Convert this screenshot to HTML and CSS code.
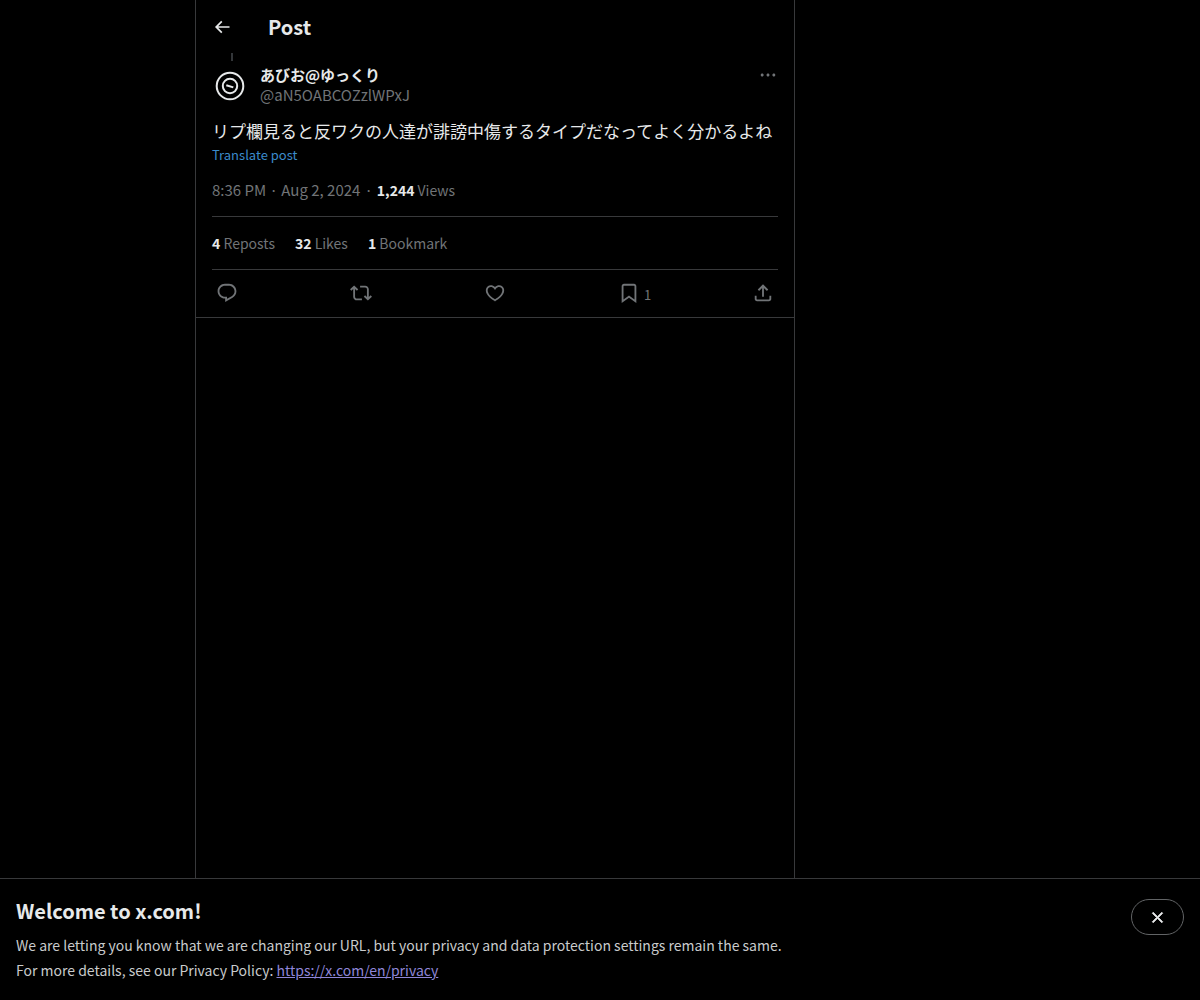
FILE: index.html
```html
<!DOCTYPE html>
<html lang="en">
<head>
<meta charset="utf-8">
<meta name="viewport" content="width=device-width, initial-scale=1">
<title>Post / X</title>
<link rel="stylesheet" href="styles.css">
</head>
<body>
<div class="layout">
  <main class="column">
    <header class="topbar">
      <button class="icon-button" type="button" aria-label="Back">
        <svg class="icon-small" viewBox="0 0 24 24"><path d="M7.414 13l5.043 5.04-1.414 1.42L3.586 12l7.457-7.46 1.414 1.42L7.414 11H21v2H7.414z"/></svg>
      </button>
      <h1 class="topbar-title">Post</h1>
    </header>
    <article class="post">
      <div class="thread"><span class="thread-line"></span></div>
      <div class="author">
        <svg class="avatar" viewBox="0 0 36 36" aria-hidden="true">
          <circle cx="18" cy="18" r="13.3"/>
          <circle cx="18" cy="18" r="7.2"/>
          <path d="M14.3 17.200l7 2.200"/>
        </svg>
        <div class="author-names">
          <a class="author-name" href="#" lang="ja">あびお@ゆっくり</a>
          <a class="author-handle" href="#">@aN5OABCOZzlWPxJ</a>
        </div>
        <button class="icon-button more" type="button" aria-label="More">
          <svg class="icon-small" viewBox="0 0 24 24"><path d="M3.200 12c0-1 .8-1.800 1.800-1.800s1.800.8 1.800 1.800-.8 1.800-1.800 1.800-1.800-.8-1.800-1.800zm8.800 1.800c1 0 1.800-.8 1.800-1.800s-.8-1.800-1.800-1.800-1.800.8-1.800 1.800.8 1.800 1.800 1.800zm7 0c1 0 1.800-.8 1.800-1.800s-.8-1.800-1.800-1.800-1.800.8-1.800 1.800.8 1.800 1.800 1.800z"/></svg>
        </button>
      </div>
      <p class="post-text" lang="ja">リプ欄見ると反ワクの人達が誹謗中傷するタイプだなってよく分かるよね</p>
      <button class="translate" type="button">Translate post</button>
      <div class="meta"><a href="#">8:36 PM · Aug 2, 2024</a><span class="dot">·</span><span class="count"><strong>1,244</strong> Views</span></div>
      <div class="stats">
        <a class="count" href="#"><strong>4</strong> Reposts</a>
        <a class="count" href="#"><strong>32</strong> Likes</a>
        <span class="count"><strong>1</strong> Bookmark</span>
      </div>
      <div class="actions">
        <button class="action" type="button" aria-label="Reply">
          <svg class="icon" viewBox="0 0 24 24"><path d="M1.751 10c0-4.420 3.584-8 8.005-8h4.366c4.490 0 8.129 3.640 8.129 8.130 0 2.960-1.607 5.680-4.196 7.110l-8.054 4.460v-3.690h-.067c-4.490.100-8.183-3.510-8.183-8.010zm8.005-6c-3.317 0-6.005 2.690-6.005 6 0 3.370 2.770 6.080 6.138 6.010l.351-.010h1.761v2.300l5.087-2.810c1.951-1.080 3.163-3.130 3.163-5.360 0-3.390-2.744-6.130-6.129-6.130H9.756z"/></svg>
        </button>
        <button class="action" type="button" aria-label="Repost">
          <svg class="icon" viewBox="0 0 24 24"><path d="M4.500 3.880l4.432 4.140-1.364 1.460L5.500 7.550V16c0 1.100.896 2 2 2H13v2H7.500c-2.209 0-4-1.790-4-4V7.550L1.432 9.480.068 8.020 4.500 3.880zM16.500 6H11V4h5.500c2.209 0 4 1.790 4 4v8.450l2.068-1.930 1.364 1.460-4.432 4.140-4.432-4.140 1.364-1.460 2.068 1.930V8c0-1.100-.896-2-2-2z"/></svg>
        </button>
        <button class="action" type="button" aria-label="Like">
          <svg class="icon" viewBox="0 0 24 24"><path d="M16.697 5.500c-1.222-.060-2.679.510-3.890 2.160l-.805 1.090-.806-1.090C9.984 6.010 8.526 5.440 7.304 5.500c-1.243.070-2.349.780-2.910 1.910-.552 1.120-.633 2.780.479 4.820 1.074 1.970 3.257 4.270 7.129 6.610 3.870-2.340 6.052-4.640 7.126-6.610 1.111-2.040 1.030-3.700.477-4.820-.561-1.130-1.666-1.840-2.908-1.910zm4.187 7.690c-1.351 2.480-4.001 5.120-8.379 7.670l-.503.300-.504-.300c-4.379-2.550-7.029-5.190-8.382-7.670-1.360-2.500-1.410-4.860-.514-6.670.887-1.790 2.647-2.910 4.601-3.010 1.651-.090 3.368.560 4.798 2.010 1.429-1.450 3.146-2.100 4.796-2.010 1.954.100 3.714 1.220 4.601 3.010.896 1.810.846 4.170-.514 6.670z"/></svg>
        </button>
        <button class="action" type="button" aria-label="1 Bookmark">
          <svg class="icon" viewBox="0 0 24 24"><path d="M4 4.500C4 3.120 5.119 2 6.500 2h11C18.881 2 20 3.120 20 4.500v18.440l-8-5.710-8 5.710V4.500zM6.500 4c-.276 0-.5.220-.5.500v14.560l6-4.290 6 4.290V4.500c0-.280-.224-.5-.5-.5h-11z"/></svg>
          <span class="action-count">1</span>
        </button>
        <button class="action" type="button" aria-label="Share">
          <svg class="icon" viewBox="0 0 24 24"><path d="M12 2.590l5.700 5.700-1.410 1.420L13 6.410V16h-2V6.410l-3.300 3.300-1.410-1.420L12 2.590zM21 15l-.020 3.510c0 1.380-1.120 2.490-2.500 2.490H5.500C4.110 21 3 19.880 3 18.500V15h2v3.500c0 .280.220.5.5.5h12.980c.280 0 .5-.220.5-.5L19 15h2z"/></svg>
        </button>
      </div>
    </article>
  </main>
</div>
<section class="banner" aria-labelledby="banner-title">
  <div class="banner-body">
    <h2 class="banner-title" id="banner-title">Welcome to x.com!</h2>
    <p class="banner-text">We are letting you know that we are changing our URL, but your privacy and data protection settings remain the same.</p>
    <p class="banner-text">For more details, see our Privacy Policy: <a class="banner-link" href="#">https://x.com/en/privacy</a></p>
  </div>
  <button class="banner-close" type="button" aria-label="Close">
    <svg class="icon-close" viewBox="0 0 24 24"><path d="M10.590 12L4.540 5.960l1.420-1.420L12 10.590l6.040-6.050 1.420 1.420L13.410 12l6.050 6.040-1.420 1.420L12 13.410l-6.040 6.050-1.420-1.420L10.590 12z"/></svg>
  </button>
</section>
</body>
</html>
```
FILE: styles.css
```css
:root {
  --text: #e7e9ea;
  --muted: #717477;
  --line: #38393b;
}

* {
  box-sizing: border-box;
}

body {
  margin: 0;
  min-height: 100vh;
  display: flex;
  flex-direction: column;
  background: #000;
  color: var(--text);
  font: 15px/20px "Noto Sans CJK JP", sans-serif;
}

h1,
h2,
p {
  margin: 0;
}

a {
  color: inherit;
  text-decoration: none;
}

button {
  padding: 0;
  border: 0;
  background: none;
  color: inherit;
  font: inherit;
  cursor: pointer;
}

svg {
  display: block;
  fill: currentColor;
}

.layout {
  flex: 1;
  display: flex;
  width: 100%;
  max-width: 810px;
  margin: 0 auto;
}

.column {
  width: 100%;
  max-width: 600px;
  border: solid var(--line);
  border-width: 0 1px;
}

.topbar {
  display: flex;
  align-items: center;
  gap: 36px;
  height: 53px;
  padding: 0 16px;
}

.topbar-title {
  font-size: 20px;
  line-height: 24px;
}

.icon-button {
  display: flex;
  align-items: center;
}

.icon-small {
  width: 20px;
  height: 20px;
}

.post {
  padding: 0 16px;
  border-bottom: 1px solid var(--line);
}

.thread {
  display: flex;
  justify-content: center;
  width: 40px;
  height: 12px;
}

.thread-line {
  width: 2px;
  height: 8px;
  background: #333639;
}

.author {
  display: flex;
  align-items: flex-start;
  gap: 12px;
}

.avatar {
  width: 36px;
  height: 36px;
  margin-top: 3px;
  fill: none;
  stroke: var(--text);
  stroke-width: 2;
}

.author-names {
  flex: 1;
  display: flex;
  flex-direction: column;
  align-items: flex-start;
}

.author-name {
  font-weight: 700;
}

.author-handle,
.more {
  color: var(--muted);
}

.post-text {
  margin-top: 14px;
  font-size: 17px;
  line-height: 24px;
}

.translate {
  display: block;
  margin-top: 2px;
  color: #3b8bcb;
  font-size: 13px;
  line-height: 20px;
}

.meta {
  display: flex;
  padding: 15px 0 16px;
  color: var(--muted);
}

.dot {
  padding: 0 4px;
}

.count {
  font-size: 14px;
}

strong {
  color: var(--text);
}

.stats {
  display: flex;
  gap: 20px;
  padding: 16px 0;
  border: solid var(--line);
  border-width: 1px 0;
  color: var(--muted);
}

.actions {
  display: flex;
  padding: 0 4px 2px;
  color: var(--muted);
}

.action {
  flex: 1;
  display: flex;
  align-items: center;
  height: 45px;
}

.action:last-child {
  flex: none;
}

.icon {
  width: 22px;
  height: 22px;
}

.action-count {
  padding: 4px 4px 0;
  font-size: 13px;
}

.banner {
  display: flex;
  align-items: flex-start;
  justify-content: space-between;
  gap: 16px;
  padding: 20px 16px 17px;
  border-top: 1px solid var(--line);
}

.banner-title {
  margin-bottom: 10px;
  font-size: 20px;
  line-height: 24px;
}

.banner-text {
  color: #c9cbcc;
  font-size: 14px;
  line-height: 25px;
}

.banner-link {
  color: #8f86d8;
  text-decoration: underline;
}

.banner-close {
  display: flex;
  flex: none;
  align-items: center;
  justify-content: center;
  width: 53px;
  height: 36px;
  border: 1px solid #626466;
  border-radius: 18px;
}

.icon-close {
  width: 17px;
  height: 17px;
  stroke: currentColor;
}
```
